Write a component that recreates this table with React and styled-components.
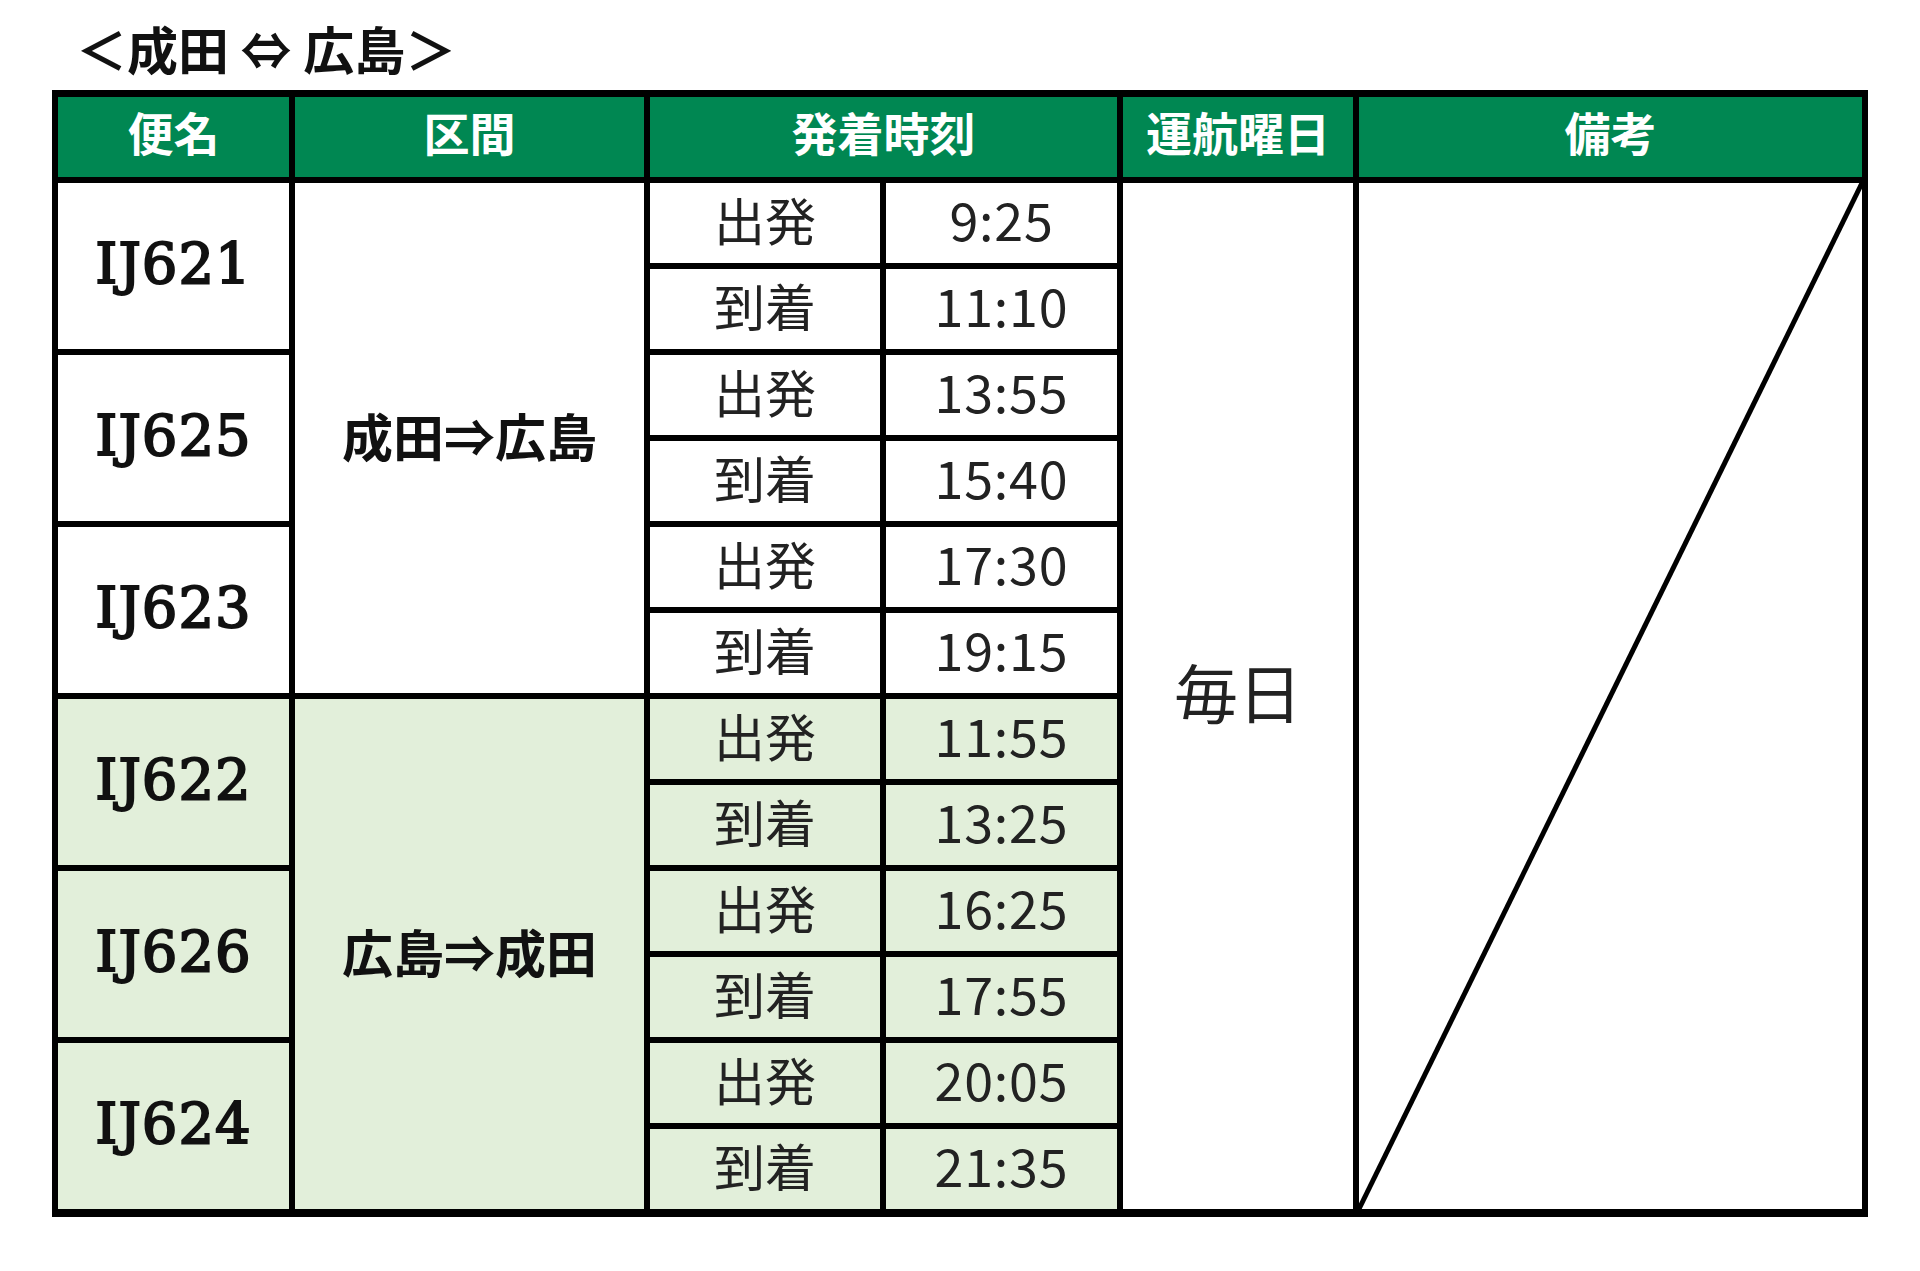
import React from "react";
import styled, { createGlobalStyle, css } from "styled-components";

const Global = createGlobalStyle`
  html, body { margin: 0; padding: 0; background: #ffffff; }
  body { font-family: "Noto Sans CJK JP", "Noto Sans", sans-serif; color: #1a1a1a; }
`;

const Page = styled.div`
  padding: 23px 0 0 52px;
`;

const Title = styled.h2`
  margin: 0 0 17px 24px;
  font-size: 51px;
  line-height: 50px;
  font-weight: 700;
  color: #111;
  font-family: "Noto Sans CJK JP", sans-serif;
  letter-spacing: 0;
`;

const Grid = styled.div`
  display: grid;
  width: max-content;
  grid-template-columns: 231px 349px 230px 231px 230px 503px;
  grid-template-rows: repeat(13, 80px);
  gap: 6px;
  padding: 7px 6px 8px 6px;
  background: #000;
`;

const place = css`
  grid-column: ${(p) => p.$col} / span ${(p) => p.$colSpan || 1};
  grid-row: ${(p) => p.$row} / span ${(p) => p.$rowSpan || 1};
  display: flex;
  align-items: center;
  justify-content: center;
  white-space: nowrap;
  padding-bottom: 9px;
  background: ${(p) => (p.$shade ? "#e2efda" : "#ffffff")};
`;

const HeaderCell = styled.div`
  ${place};
  background: #008752;
  color: #ffffff;
  font-size: 46px;
  font-weight: 700;
  padding-bottom: 13px;
`;

const FlightCell = styled.div`
  ${place};
  font-family: "DejaVu Serif", "Liberation Serif", serif;
  font-weight: 400;
  font-size: 56px;
  color: #111;
  -webkit-text-stroke: 2px #111;
  letter-spacing: 1px;
  padding-bottom: 6px;
`;

const RouteCell = styled.div`
  ${place};
  font-size: 51px;
  font-weight: 700;
  color: #111;
  padding-bottom: 6px;
`;

const LabelCell = styled.div`
  ${place};
  font-size: 51px;
  font-weight: 400;
  color: #222;
`;

const TimeCell = styled.div`
  ${place};
  font-size: 52px;
  font-weight: 400;
  color: #222;
  letter-spacing: 0.8px;
`;

const DaysCell = styled.div`
  ${place};
  font-size: 64px;
  font-weight: 400;
  color: #222;
  padding-bottom: 12px;
`;

const NoteCell = styled.div`
  ${place};
  position: relative;
  padding: 0;
`;

const Diagonal = styled.svg`
  position: absolute;
  inset: 0;
  width: 100%;
  height: 100%;
  overflow: visible;
`;

const flights = [
  { id: "IJ621", dep: "9:25", arr: "11:10" },
  { id: "IJ625", dep: "13:55", arr: "15:40" },
  { id: "IJ623", dep: "17:30", arr: "19:15" },
  { id: "IJ622", dep: "11:55", arr: "13:25" },
  { id: "IJ626", dep: "16:25", arr: "17:55" },
  { id: "IJ624", dep: "20:05", arr: "21:35" },
];

const routes = ["成田⇒広島", "広島⇒成田"];

export default function App() {
  return (
    <Page>
      <Global />
      <Title>＜成田 ⇔ 広島＞</Title>
      <Grid>
        <HeaderCell $col={1} $row={1}>便名</HeaderCell>
        <HeaderCell $col={2} $row={1}>区間</HeaderCell>
        <HeaderCell $col={3} $colSpan={2} $row={1}>発着時刻</HeaderCell>
        <HeaderCell $col={5} $row={1}>運航曜日</HeaderCell>
        <HeaderCell $col={6} $row={1}>備考</HeaderCell>

        {routes.map((r, j) => (
          <RouteCell key={r} $col={2} $row={2 + j * 6} $rowSpan={6} $shade={j === 1}>
            {r}
          </RouteCell>
        ))}

        {flights.map((f, i) => {
          const shade = i >= 3;
          const row = 2 + i * 2;
          return (
            <React.Fragment key={f.id}>
              <FlightCell $col={1} $row={row} $rowSpan={2} $shade={shade}>
                {f.id}
              </FlightCell>
              <LabelCell $col={3} $row={row} $shade={shade}>出発</LabelCell>
              <TimeCell $col={4} $row={row} $shade={shade}>{f.dep}</TimeCell>
              <LabelCell $col={3} $row={row + 1} $shade={shade}>到着</LabelCell>
              <TimeCell $col={4} $row={row + 1} $shade={shade}>{f.arr}</TimeCell>
            </React.Fragment>
          );
        })}

        <DaysCell $col={5} $row={2} $rowSpan={12}>毎日</DaysCell>
        <NoteCell $col={6} $row={2} $rowSpan={12}>
          <Diagonal viewBox="0 0 100 100" preserveAspectRatio="none">
            <line
              x1="0"
              y1="100"
              x2="100"
              y2="0"
              stroke="#000"
              strokeWidth="5"
              vectorEffect="non-scaling-stroke"
            />
          </Diagonal>
        </NoteCell>
      </Grid>
    </Page>
  );
}
